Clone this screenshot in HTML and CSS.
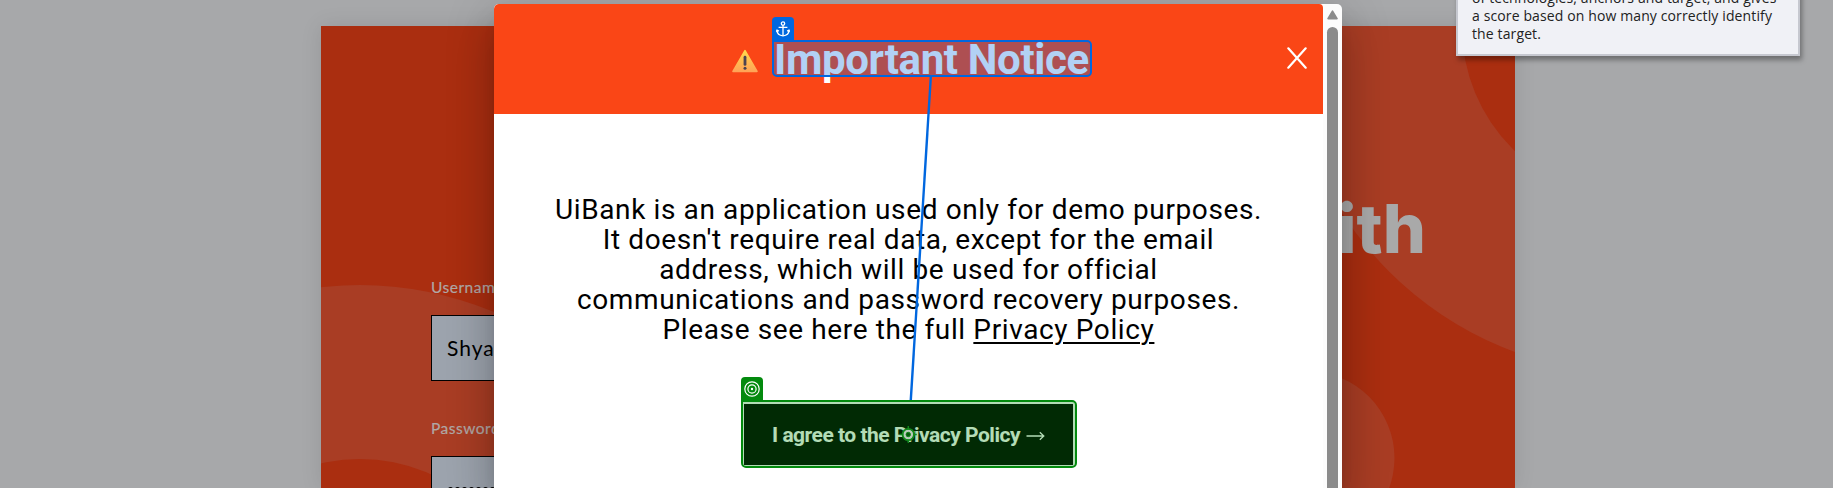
FILE: index.html
```html
<!DOCTYPE html>
<html lang="en">
<head>
<meta charset="utf-8">
<title>UiBank</title>
<link rel="stylesheet" href="styles.css">
</head>
<body>
<main class="page">
  <section class="hero">
    <svg class="hero-art" viewBox="0 0 1194 462" width="1194" height="462">
      <path fill-rule="evenodd" d="M-307 605a346 346 0 1 0 692 0a346 346 0 1 0 -692 0zM-133 605a172 172 0 1 0 344 0a172 172 0 1 0 -344 0z"/>
      <path fill-rule="evenodd" d="M967 1a346 346 0 1 0 692 0a346 346 0 1 0 -692 0zM1141 1a172 172 0 1 0 344 0a172 172 0 1 0 -344 0z"/>
      <circle cx="987" cy="432" r="86.5"/>
    </svg>
    <form class="login">
      <label class="label">Username</label>
      <div class="field">Shya</div>
      <label class="label">Password</label>
      <div class="field password"><i></i><i></i><i></i><i></i><i></i><i></i><i></i></div>
    </form>
    <h1 class="tagline">with</h1>
  </section>
</main>

<div class="dialog">
  <div class="content">
    <header class="dialog-head">
      <svg class="warn" width="28" height="24" viewBox="0 0 28 24">
        <defs><linearGradient id="amber" x1="0" y1="0" x2="0" y2="1"><stop offset="0" stop-color="#ffd84c"/><stop offset="1" stop-color="#ffa457"/></linearGradient></defs>
        <path d="M14 1.6L26 22.4H2z" fill="url(#amber)" stroke="url(#amber)" stroke-width="1.6" stroke-linejoin="round"/>
        <path d="M14 8.2v7.2" stroke="#4d4450" stroke-width="2.8" stroke-linecap="round"/>
        <circle cx="14" cy="19.3" r="1.5" fill="#4d4450"/>
      </svg>
      <h2 class="title">Important Notice</h2>
      <svg class="close" width="20" height="22" viewBox="0 0 20 22"><path d="M1.3 1.3L18.7 20.7M18.7 1.3L1.3 20.7" stroke="#fff" stroke-width="2.2" stroke-linecap="round"/></svg>
    </header>
    <div class="dialog-body">
      <p class="notice">
        UiBank is an application used only for demo purposes.<br>
        It doesn't require real data, except for the email<br>
        address, which will be used for official<br>
        communications and password recovery purposes.<br>
        Please see here the full <a class="link">Privacy Policy</a>
      </p>
      <button class="agree"><span>I agree to the Privacy Policy</span><svg width="19" height="12" viewBox="0 0 19 12"><path d="M.5 6h17M13.8 2.2L17.8 6l-4 3.8" fill="none" stroke="#fff" stroke-width="1.3"/></svg></button>
    </div>
  </div>
  <div class="scrollbar">
    <svg class="arrow" width="11" height="10" viewBox="0 0 11 10"><path d="M5.5 1.2L10 8.6H1z" fill="#8b8b8b" stroke="#8b8b8b" stroke-width="1.6" stroke-linejoin="round"/></svg>
    <div class="thumb"></div>
  </div>
</div>

<div class="mark anchor-mark">
  <div class="badge">
    <svg width="14" height="16" viewBox="0 0 14 16" fill="none" stroke="#fff" stroke-width="1.3"><circle cx="7" cy="2.6" r="1.7"/><path d="M7 4.3v10.5M2.6 6.4h8.8"/><path d="M.9 9.3c.2 3.3 2.7 5.3 6.1 5.5c3.4-.2 5.9-2.2 6.1-5.5M.3 10.8L1 9.2l1.9 1M13.7 10.8L13 9.2l-1.9 1"/></svg>
  </div>
</div>
<div class="mark target-mark">
  <div class="badge">
    <svg width="16" height="16" viewBox="0 0 16 16" fill="none" stroke="#fff" stroke-width="1.2"><circle cx="8" cy="8" r="7.2"/><circle cx="8" cy="8" r="4.1"/><circle cx="8" cy="8" r="1.2" fill="#fff" stroke="none"/></svg>
  </div>
</div>
<svg class="connector" width="1833" height="488" viewBox="0 0 1833 488">
  <path d="M930.8 77L910.8 400" stroke="#0067df" stroke-width="2.4"/>
  <circle cx="908.3" cy="434.5" r="3.8" fill="none" stroke="#b9cbbb" stroke-width="3"/>
  <circle cx="908.3" cy="434.5" r="5.7" fill="none" stroke="#12891c" stroke-width="1.8"/>
  <path d="M908.3 426v3.5M908.3 439.5v3.5M899.8 434.5h3.5M913.3 434.5h3.5" stroke="#12891c" stroke-width="1.5"/>
  <circle cx="908.3" cy="434.5" r="2.2" fill="#065a0c" stroke="#12891c"/>
</svg>

<aside class="tooltip">of technologies, anchors and target, and gives<br>a score based on how many correctly identify<br>the target.</aside>
</body>
</html>
```
FILE: styles.css
```css
* { box-sizing: border-box; }
html, body { margin: 0; height: 488px; overflow: hidden; }
body { position: relative; background: #a7a8aa; font-family: Roboto, sans-serif; }

.page { height: 488px; padding: 26px 318px 0 321px; overflow: hidden; }
.hero {
  position: relative;
  display: flex;
  justify-content: space-between;
  height: 462px;
  background: #aa2e10;
  box-shadow: 0 0 20px rgba(0, 0, 0, .1);
}
.hero-art { position: absolute; inset: 0; fill: #a93d24; }
.login {
  position: relative;
  width: 420px;
  height: 462px;
  overflow: hidden;
  padding: 249px 0 0 110px;
  font-family: Lato, sans-serif;
}
.label {
  display: block;
  height: 40px;
  line-height: 25px;
  font-size: 15.5px;
  letter-spacing: .5px;
  color: #b0a8a6;
  -webkit-text-stroke: .2px #b0a8a6;
}
.field {
  height: 66px;
  margin-bottom: 35px;
  padding-left: 15px;
  border: 1px solid #000;
  background: #9ca3ad;
  color: #000;
  font-size: 21px;
  line-height: 64px;
  letter-spacing: 1px;
}
.password { display: flex; gap: 2px; padding-top: 30px; padding-left: 16px; }
.password i { width: 5px; height: 5px; border-radius: 50%; background: #000; }
.tagline {
  position: relative;
  margin: 165px 89px 0 0;
  font: 800 68px/74px Inter, sans-serif;
  color: #a9a9a9;
}

.dialog {
  position: absolute;
  left: 494px;
  top: 4px;
  display: flex;
  width: 848px;
  height: 484px;
  border-radius: 5px 5px 0 0;
  overflow: hidden;
  background: #fcfcfc;
  box-shadow: 0 11px 15px -7px rgba(0,0,0,.2), 0 34px 38px 3px rgba(0,0,0,.14), 0 9px 46px 8px rgba(0,0,0,.12);
}
.content { width: 829px; background: #fff; border-radius: 4px 4px 0 0; overflow: hidden; }
.dialog-head {
  display: flex;
  align-items: center;
  height: 110px;
  padding: 0 16px 0 237px;
  background: #fa4616;
}
.warn { margin-top: 4px; }
.title {
  margin: 2px 0 0 15px;
  color: #fff;
  font-size: 42px;
  font-weight: 700;
  line-height: 50px;
  letter-spacing: -.35px;
  white-space: nowrap;
}
.close { margin: -2px 0 0 auto; }
.dialog-body { display: flex; flex-direction: column; align-items: center; padding-top: 81px; }
.notice {
  margin: 0;
  color: #000;
  font-size: 28px;
  line-height: 30px;
  letter-spacing: .62px;
  text-align: center;
  white-space: nowrap;
}
.link { text-decoration: underline; text-decoration-thickness: 2px; text-underline-offset: 3px; }
.agree {
  display: flex;
  align-items: center;
  justify-content: center;
  gap: 6px;
  width: 329px;
  height: 61px;
  margin-top: 59px;
  padding: 0;
  border: 0;
  background: #000;
  color: #fff;
  font: 700 21px/24px Roboto, sans-serif;
  letter-spacing: -.5px;
  white-space: nowrap;
}
.agree svg { margin-top: 3px; }
.scrollbar { display: flex; flex-direction: column; align-items: center; width: 19px; padding-top: 6px; }
.arrow { flex: none; }
.thumb { width: 11px; flex: 1; margin-top: 7px; border-radius: 6px 6px 0 0; background: #8b8b8b; }

.mark { position: absolute; border: 2px solid; border-radius: 5px; }
.badge {
  position: absolute;
  left: -2px;
  top: -25px;
  display: flex;
  align-items: center;
  justify-content: center;
  width: 22px;
  height: 24px;
  border-radius: 4px 4px 0 0;
}
.anchor-mark { left: 772px; top: 40px; width: 320px; height: 37px; border-color: #0067df; background: rgba(0, 103, 223, .3); border-top-left-radius: 0; }
.anchor-mark .badge { background: #0067df; }
.target-mark { left: 741px; top: 400px; width: 336px; height: 68px; border-color: #038a0e; background: rgba(3, 138, 14, .3); border-top-left-radius: 0; }
.target-mark .badge { background: #038a0e; }
.connector { position: absolute; left: 0; top: 0; }

.tooltip {
  position: absolute;
  left: 1456px;
  top: -60px;
  width: 344px;
  height: 116px;
  padding: 47px 0 0 14px;
  border: 2px solid #c6c8d0;
  background: #f0f1f6;
  box-shadow: 2px 4px 5px rgba(0, 0, 0, .35);
  color: #222;
  font: 14px/18px "Open Sans", sans-serif;
  letter-spacing: .12px;
  white-space: nowrap;
}
```
